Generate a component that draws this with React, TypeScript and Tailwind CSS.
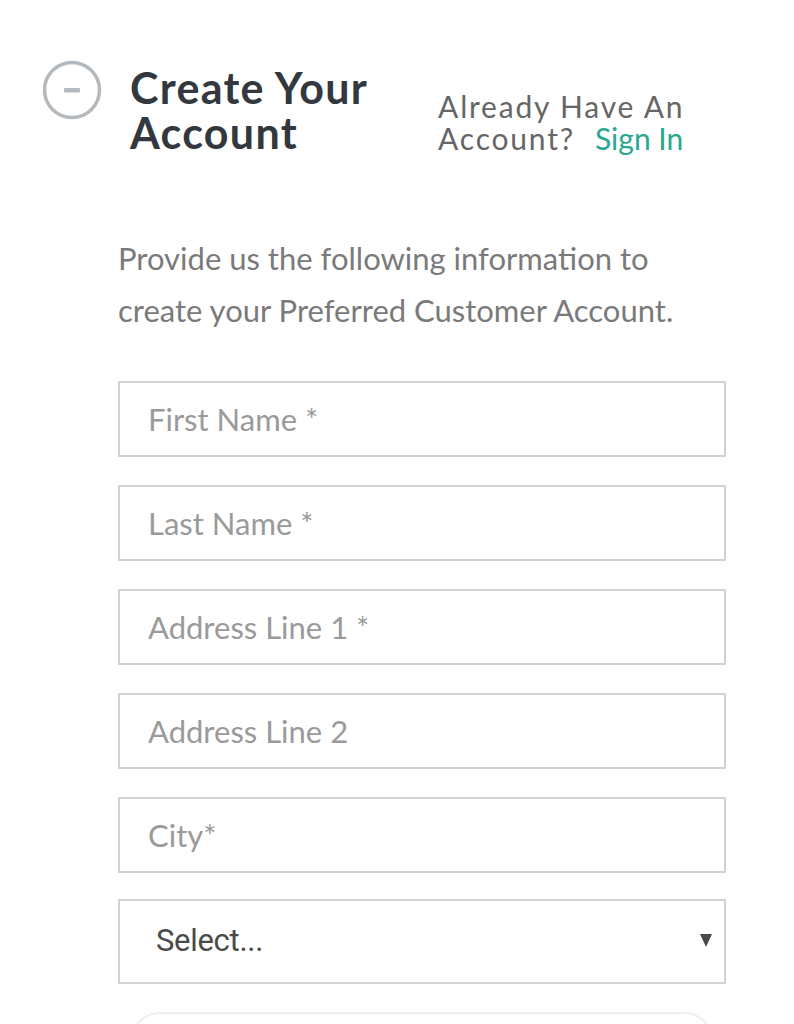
import React from "react";

const fields = ["First Name *", "Last Name *", "Address Line 1 *", "Address Line 2", "City*"];

export default function App() {
  return (
    <div className="min-h-[1024px] w-[794px] overflow-hidden bg-white" style={{ fontFamily: "Lato, 'Noto Sans', sans-serif" }}>
      <div className="flex items-start pt-[60px] pl-[43px]">
        <svg width="60" height="60" viewBox="0 0 60 60" className="shrink-0">
          <circle cx="29" cy="30" r="27.5" fill="none" stroke="#b4b9bd" strokeWidth="3.5" />
          <rect x="21" y="28" width="16" height="4.5" rx="1" fill="#b4b9bd" />
        </svg>
        <h1 className="ml-[27px] mt-[5px] text-[43px] font-bold leading-[45px] tracking-[1.3px] text-[#32383e]">
          Create Your
          <br />
          Account
        </h1>
        <p className="ml-[70px] mt-[30px] text-[30px] leading-[32px] tracking-[1.8px] text-[#666]">
          Already Have An
          <br />
          Account?<span className="ml-[20px] tracking-[0px] text-[#2aa88f]">Sign In</span>
        </p>
      </div>
      <div className="mx-[118px] w-[608px]">
        <p className="mt-[77px] text-[31px] leading-[52px] text-[#7a7a7a]">
          Provide us the following information to create your Preferred Customer Account.
        </p>
        <div className="mt-[45px] flex flex-col gap-[28px]">
          {fields.map((f) => (
            <div key={f} className="flex h-[76px] items-center border-2 border-[#d2d2d2] pl-[28px] text-[31px] text-[#9a9a9a]">
              {f}
            </div>
          ))}
          <div className="-mt-[2px] flex h-[85px] items-center justify-between border-2 border-[#d2d2d2] pl-[36px] pr-[12px] text-[31px] text-[#4a4a4a]">
            <span className="tracking-[-0.3px]" style={{ fontFamily: "'Roboto', 'Lato', sans-serif" }}>Select...</span>
            <svg width="12" height="14" viewBox="0 0 12 14" className="mb-[2px]">
              <polygon points="0,0 12,0 6,13" fill="#4a4a4a" />
            </svg>
          </div>
        </div>
        <div className="mx-[12px] mt-[28px] h-[60px] rounded-[30px] border-2 border-[#eeeeee]" />
      </div>
    </div>
  );
}
